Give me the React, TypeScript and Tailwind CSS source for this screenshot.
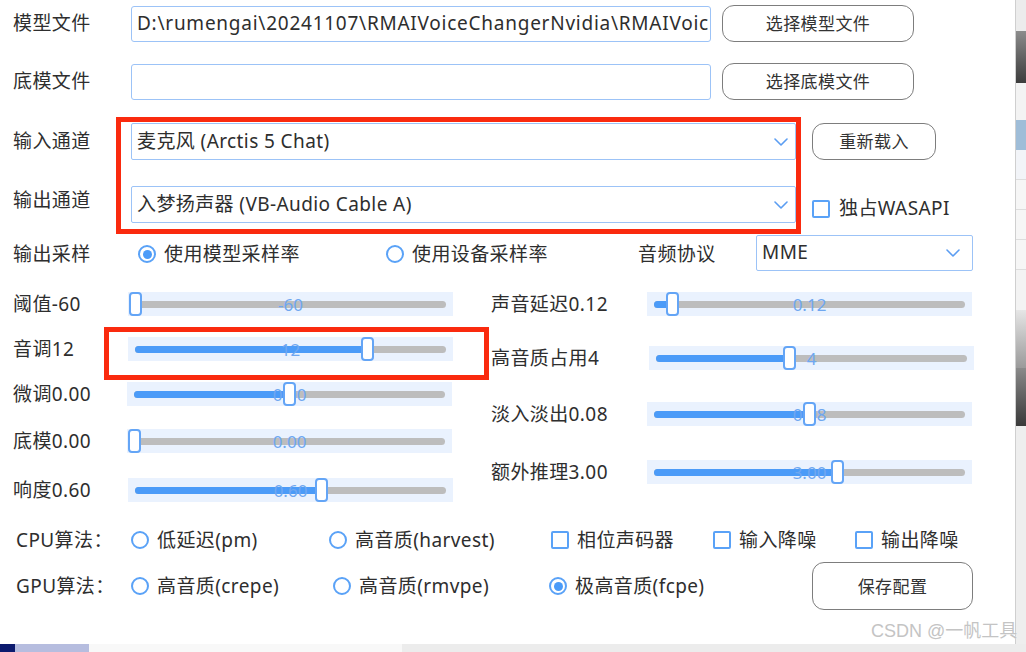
import React from "react";

const Chevron = () => (
  <svg width="14" height="8" viewBox="0 0 14 8" fill="none">
    <path d="M1 1 L7 7 L13 1" stroke="#5b9df2" strokeWidth="1.6" strokeLinecap="round" strokeLinejoin="round" />
  </svg>
);

const Select = ({ text, w }: { text: string; w: string }) => (
  <div className={`${w} h-[37px] border border-[#9cc3f7] rounded-[2px] bg-white flex items-center justify-between pl-[5px] pr-[7px] whitespace-nowrap`}>
    <span>{text}</span>
    <Chevron />
  </div>
);

const Radio = ({ on }: { on?: boolean }) => (
  <div className="w-[18px] h-[18px] rounded-full border-[2.5px] border-[#5aa2f7] bg-white flex items-center justify-center shrink-0">
    {on && <div className="w-[9px] h-[9px] rounded-full bg-[#4b9bf8]" />}
  </div>
);

const Check = () => (
  <div className="w-[18px] h-[18px] rounded-[2px] border-[2.5px] border-[#5aa2f7] bg-white shrink-0" />
);

const Slider = ({ pct, value }: { pct: number; value: string }) => {
  const c = 7 + pct * 311;
  return (
    <div className="relative w-[325px] h-[24px] bg-[#eaf2fe]">
      <div className="absolute left-[7px] right-[7px] top-[9px] h-[7px] rounded-full bg-[#bdbdbd]" />
      <div className="absolute left-[7px] top-[9px] h-[7px] rounded-full bg-[#4b9bf8]" style={{ width: c - 7 }} />
      <div className="absolute inset-0 flex items-center justify-center text-[17px] leading-none tracking-normal text-[#6fa7f0]">{value}</div>
      <div
        className="absolute top-0 w-[13px] h-[24px] rounded-[4px] border-2 border-[#64a5f6] bg-white"
        style={{ left: c - 6.5 }}
      />
    </div>
  );
};

const Btn = ({ text, w, h }: { text: string; w: string; h: string }) => (
  <div className={`${w} ${h} rounded-[12px] border border-[#7d7d7d] bg-white flex items-center justify-center text-[17px] text-[#333] shrink-0`}>
    {text}
  </div>
);

export default function App() {
  return (
    <div className="relative w-[1026px] h-[652px] overflow-hidden bg-[#eeeeee] font-['Noto_Sans','Noto_Sans_CJK_SC',sans-serif] text-[#2e2e2e] text-[19px] leading-none tracking-[0.4px]">
      <div className="flex h-[644px]">
        {/* main panel */}
        <div className="w-[1016px] h-[644px] bg-white border-r border-[#cfcfcf] shadow-[1px_1px_3px_rgba(0,0,0,0.25)] flex flex-col">
          {/* row 1 */}
          <div className="flex items-center h-[37px] mt-[5px]">
            <div className="w-[131px] pl-[13px]">模型文件</div>
            <div className="w-[580px] h-[36px] border border-[#9cc3f7] rounded-[3px] pl-[5px] flex items-center overflow-hidden whitespace-nowrap tracking-[0.75px]">
              D:\rumengai\20241107\RMAIVoiceChangerNvidia\RMAIVoic
            </div>
            <div className="ml-[11px]">
              <Btn text="选择模型文件" w="w-[192px]" h="h-[37px]" />
            </div>
          </div>
          {/* row 2 */}
          <div className="flex items-center h-[37px] mt-[21px]">
            <div className="w-[131px] pl-[13px]">底模文件</div>
            <div className="w-[580px] h-[36px] border border-[#9cc3f7] rounded-[3px]" />
            <div className="ml-[11px]">
              <Btn text="选择底模文件" w="w-[192px]" h="h-[37px]" />
            </div>
          </div>
          {/* channels */}
          <div className="flex mt-[17px] h-[117px]">
            <div className="w-[116px] pl-[13px] flex flex-col">
              <div className="h-[37px] mt-[6px] flex items-center">输入通道</div>
              <div className="h-[37px] mt-[22px] flex items-center">输出通道</div>
            </div>
            <div className="w-[685px] h-[117px] border-[5px] border-[#fa2a0e] pl-[10px] pt-[1px] flex flex-col">
              <Select text="麦克风 (Arctis 5 Chat)" w="w-full" />
              <div className="mt-[26px]">
                <Select text="入梦扬声器 (VB-Audio Cable A)" w="w-full" />
              </div>
            </div>
            <div className="ml-[11px] flex flex-col">
              <div className="mt-[6px]">
                <Btn text="重新载入" w="w-[124px]" h="h-[37px]" />
              </div>
              <div className="mt-[39px] flex items-center gap-[9px]">
                <Check />
                <span>独占WASAPI</span>
              </div>
            </div>
          </div>
          {/* sample row */}
          <div className="flex items-center h-[36px] mt-[2px]">
            <div className="w-[138px] pl-[13px]">输出采样</div>
            <div className="w-[248px] flex items-center gap-[8px]">
              <Radio on />
              <span>使用模型采样率</span>
            </div>
            <div className="w-[252px] flex items-center gap-[8px]">
              <Radio />
              <span>使用设备采样率</span>
            </div>
            <div className="w-[118px]">音频协议</div>
            <div className="w-[217px] h-[36px] border border-[#9cc3f7] rounded-[2px] flex items-center justify-between pl-[5px] pr-[12px] -mt-[3px]">
              <span>MME</span>
              <Chevron />
            </div>
          </div>
          {/* sliders */}
          <div className="flex mt-[20px]">
            <div className="w-[491px] flex flex-col">
              <div className="flex items-center h-[24px]">
                <div className="w-[128px] pl-[13px]">阈值-60</div>
                <Slider pct={0} value="-60" />
              </div>
              <div className="relative flex items-center h-[24px] mt-[21px]">
                <div className="w-[128px] pl-[13px]">音调12</div>
                <Slider pct={0.746} value="12" />
                <div className="absolute left-[104px] top-[-10px] w-[385px] h-[53px] border-[5px] border-[#fa2a0e]" />
              </div>
              <div className="flex items-center h-[24px] mt-[21px]">
                <div className="w-[127px] pl-[13px]">微调0.00</div>
                <Slider pct={0.5} value="0.00" />
              </div>
              <div className="flex items-center h-[24px] mt-[23px]">
                <div className="w-[127px] pl-[13px]">底模0.00</div>
                <Slider pct={0} value="0.00" />
              </div>
              <div className="flex items-center h-[24px] mt-[25px]">
                <div className="w-[128px] pl-[13px]">响度0.60</div>
                <Slider pct={0.6} value="0.60" />
              </div>
            </div>
            <div className="flex flex-col">
              <div className="flex items-center h-[24px]">
                <div className="w-[156px]">声音延迟0.12</div>
                <Slider pct={0.06} value="0.12" />
              </div>
              <div className="flex items-center h-[24px] mt-[30px]">
                <div className="w-[158px]">高音质占用4</div>
                <Slider pct={0.43} value="4" />
              </div>
              <div className="flex items-center h-[24px] mt-[32px]">
                <div className="w-[156px]">淡入淡出0.08</div>
                <Slider pct={0.5} value="0.08" />
              </div>
              <div className="flex items-center h-[24px] mt-[34px]">
                <div className="w-[156px]">额外推理3.00</div>
                <Slider pct={0.59} value="3.00" />
              </div>
            </div>
          </div>
          {/* CPU row */}
          <div className="flex items-center h-[28px] mt-[24px]">
            <div className="w-[131px] pl-[16px]">CPU算法：</div>
            <div className="w-[198px] flex items-center gap-[8px]">
              <Radio />
              <span>低延迟(pm)</span>
            </div>
            <div className="w-[222px] flex items-center gap-[8px]">
              <Radio />
              <span>高音质(harvest)</span>
            </div>
            <div className="w-[162px] flex items-center gap-[8px]">
              <Check />
              <span>相位声码器</span>
            </div>
            <div className="w-[142px] flex items-center gap-[8px]">
              <Check />
              <span>输入降噪</span>
            </div>
            <div className="flex items-center gap-[8px]">
              <Check />
              <span>输出降噪</span>
            </div>
          </div>
          {/* GPU row */}
          <div className="flex items-center h-[48px] mt-[8px]">
            <div className="w-[131px] pl-[16px]">GPU算法：</div>
            <div className="w-[202px] flex items-center gap-[8px]">
              <Radio />
              <span>高音质(crepe)</span>
            </div>
            <div className="w-[216px] flex items-center gap-[8px]">
              <Radio />
              <span>高音质(rmvpe)</span>
            </div>
            <div className="w-[263px] flex items-center gap-[8px]">
              <Radio on />
              <span>极高音质(fcpe)</span>
            </div>
            <Btn text="保存配置" w="w-[161px]" h="h-[48px]" />
          </div>
        </div>
        {/* right background strip */}
        <div className="flex-1 flex flex-col">
          <div className="h-[31px] bg-[#ececec]" />
          <div className="h-[52px] bg-gradient-to-b from-[#8c8c8c] to-[#3d3d3d]" />
          <div className="h-[37px] bg-[#f3f3f3]" />
          <div className="h-[30px] bg-[#9fbdd8]" />
          <div className="h-[30px] bg-[#f2f4f8] border-b border-[#dddddd]" />
          <div className="h-[30px] bg-[#f6f6f6] border-b border-[#dddddd]" />
          <div className="h-[30px] bg-[#f6f6f6] border-b border-[#dddddd]" />
          <div className="h-[30px] bg-[#f6f6f6] border-b border-[#dddddd]" />
          <div className="h-[40px] bg-[#f3f3f3]" />
          <div className="h-[58px] bg-gradient-to-b from-[#e6e6e6] to-[#9a9a9a]" />
          <div className="h-[58px] bg-gradient-to-b from-[#8a8a8a] to-[#3a3a3a]" />
          <div className="flex-1 bg-[#eeeeee]" />
        </div>
      </div>
      {/* bottom background strip */}
      <div className="flex h-[8px]">
        <div className="w-[15px] bg-[#0c1a6e]" />
        <div className="w-[74px] bg-[#b6bddf]" />
        <div className="w-[313px] bg-[#f8f8f8]" />
        <div className="flex-1 bg-[#ececec]" />
      </div>
      {/* watermark */}
      <div className="absolute left-[871px] top-[622px] text-[18px] leading-none tracking-normal text-[#c4c4c4] font-['Liberation_Sans','Noto_Sans_CJK_SC',sans-serif] whitespace-nowrap [text-shadow:0_0_1px_rgba(255,255,255,0.9)]">
        CSDN @一帆工具
      </div>
    </div>
  );
}
